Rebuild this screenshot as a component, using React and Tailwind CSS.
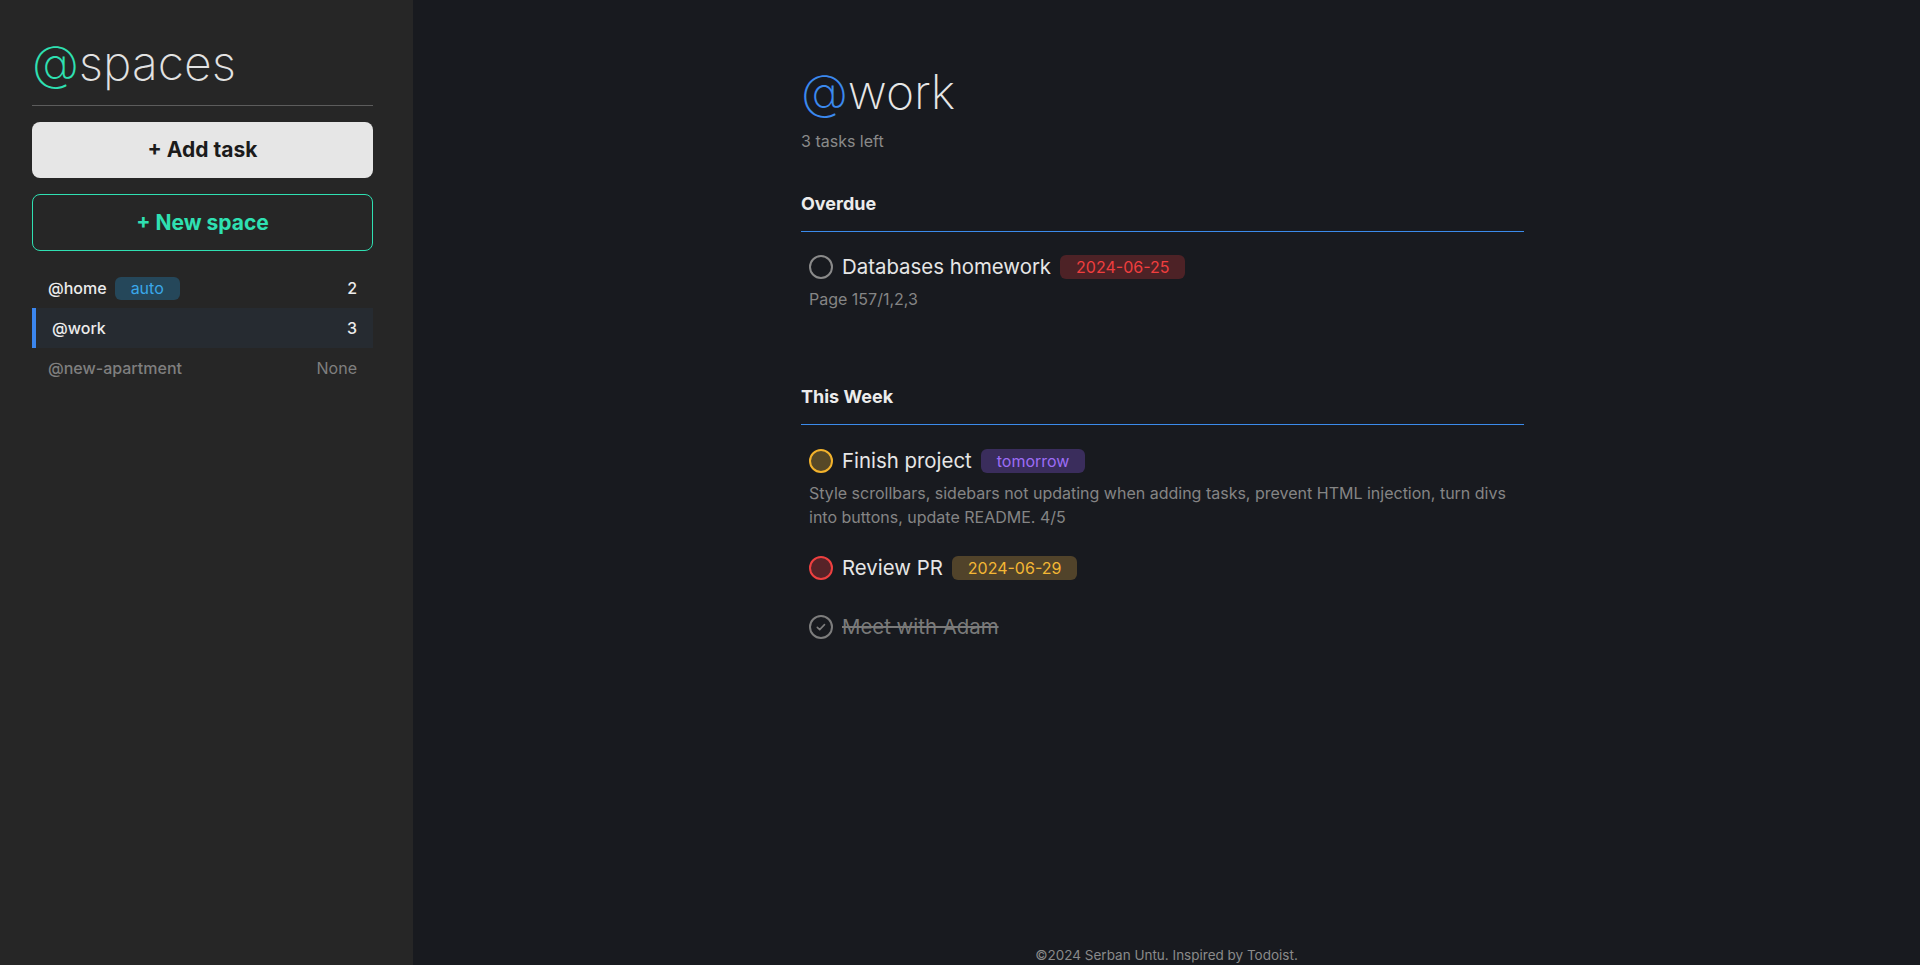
import React from "react";

const spaces = [
    { name: "@home", count: "2", auto: true },
    { name: "@work", count: "3", active: true },
    { name: "@new-apartment", count: "None", muted: true },
];

const sections = [
    {
        title: "Overdue",
        tasks: [
            {
                name: "Databases homework",
                badge: "2024-06-25",
                badgeClass: "bg-[#4d2226] text-[#f03e3e]",
                desc: "Page 157/1,2,3",
                dot: "border-[#8a8a8a]",
            },
        ],
    },
    {
        title: "This Week",
        tasks: [
            {
                name: "Finish project",
                badge: "tomorrow",
                badgeClass: "bg-[#3a2d5c] text-[#9d6cf6]",
                desc: "Style scrollbars, sidebars not updating when adding tasks, prevent HTML injection, turn divs into buttons, update README. 4/5",
                dot: "border-[#f2b22c] bg-[#564827]",
            },
            {
                name: "Review PR",
                badge: "2024-06-29",
                badgeClass: "bg-[#51432a] text-[#f4b734]",
                dot: "border-[#ee4040] bg-[#572328]",
            },
            { name: "Meet with Adam", done: true },
        ],
    },
];

function CheckCircle() {
    return (
        <svg width="24" height="24" viewBox="0 0 24 24" fill="none" className="shrink-0">
            <circle cx="12" cy="12" r="11" stroke="#7d7d7d" strokeWidth="2" />
            <path d="M8.3 12.3l2.4 2.3 4.8-5" stroke="#7d7d7d" strokeWidth="1.6" strokeLinecap="round" strokeLinejoin="round" />
        </svg>
    );
}

function Task({ task }) {
    return (
        <div className="pl-2 pb-[27px]">
            <div className="flex items-center h-6">
                {task.done ? (
                    <CheckCircle />
                ) : (
                    <span className={`w-6 h-6 rounded-full border-2 shrink-0 ${task.dot}`} />
                )}
                <span
                    className={`ml-[9px] text-[20.4px] leading-6 ${task.done ? "text-[#7a7a7a] line-through" : "text-[#e6e6e6]"}`}
                >
                    {task.name}
                </span>
                {task.badge && (
                    <span className={`ml-[9px] px-4 rounded-md text-base leading-6 ${task.badgeClass}`}>
                        {task.badge}
                    </span>
                )}
            </div>
            <div className="mt-2 text-base leading-6 text-[#858585]">{task.desc}</div>
        </div>
    );
}

export default function App() {
    return (
        <div className="flex h-screen w-full font-['Inter',sans-serif] bg-[#181a1f] overflow-hidden">
            <aside className="w-[413px] shrink-0 bg-[#262626] pl-8 pr-10">
                <h1 className="pt-[39px] pb-[18px] text-5xl leading-none font-extralight border-b border-[#5c5c5c]">
                    <span className="text-[#2fe0b2]">@</span>
                    <span className="text-[#e2e2e2]">spaces</span>
                </h1>
                <button className="mt-4 w-full h-14 rounded-lg bg-[#e6e6e6] text-[#1b1b1b] text-[21px] font-bold">
                    + Add task
                </button>
                <button className="mt-4 w-full h-[57px] rounded-lg border border-[#2fe0b2] text-[#2fe0b2] text-[21px] font-bold">
                    + New space
                </button>
                <ul className="mt-[17px]">
                    {spaces.map((s) => (
                        <li
                            key={s.name}
                            className={`flex items-center h-10 pr-4 text-base ${
                                s.active ? "bg-[#262b31] border-l-4 border-[#3b86ee] pl-4" : "pl-4"
                            }`}
                        >
                            <span className={`font-medium ${s.muted ? "text-[#7f7f7f]" : "text-[#ececec]"}`}>
                                {s.name}
                            </span>
                            {s.auto && (
                                <span className="ml-2 px-4 rounded-md bg-[#25475a] text-[#3aa7ea] leading-[23px]">
                                    auto
                                </span>
                            )}
                            <span
                                className={`ml-auto ${s.muted ? "text-[#7f7f7f]" : "text-[#ececec] font-medium"}`}
                            >
                                {s.count}
                            </span>
                        </li>
                    ))}
                </ul>
            </aside>

            <main className="flex-1 flex flex-col h-screen">
                <div className="flex-1 ml-[388px] w-[723px] pt-[68px]">
                    <h2 className="text-5xl leading-none font-extralight text-[#e6e6e6]">
                        <span className="text-[#3b89ee]">@</span>work
                    </h2>
                    <p className="mt-[13px] text-base leading-6 text-[#8a8a8a]">3 tasks left</p>

                    {sections.map((sec, i) => (
                        <section key={sec.title} className={i === 0 ? "mt-[37px]" : "mt-[45px]"}>
                            <h3 className="pb-[13px] border-b border-[#3b8beb] text-lg leading-7 font-bold text-[#ececec]">
                                {sec.title}
                            </h3>
                            <div className={i === 0 ? "pt-[23px]" : "pt-6"}>
                                {sec.tasks.map((t) => (
                                    <Task key={t.name} task={t} />
                                ))}
                            </div>
                        </section>
                    ))}
                </div>
                <footer className="text-center text-[13.5px] leading-5 text-[#8a8a8a]">
                    ©2024 Serban Untu. Inspired by Todoist.
                </footer>
            </main>
        </div>
    );
}
